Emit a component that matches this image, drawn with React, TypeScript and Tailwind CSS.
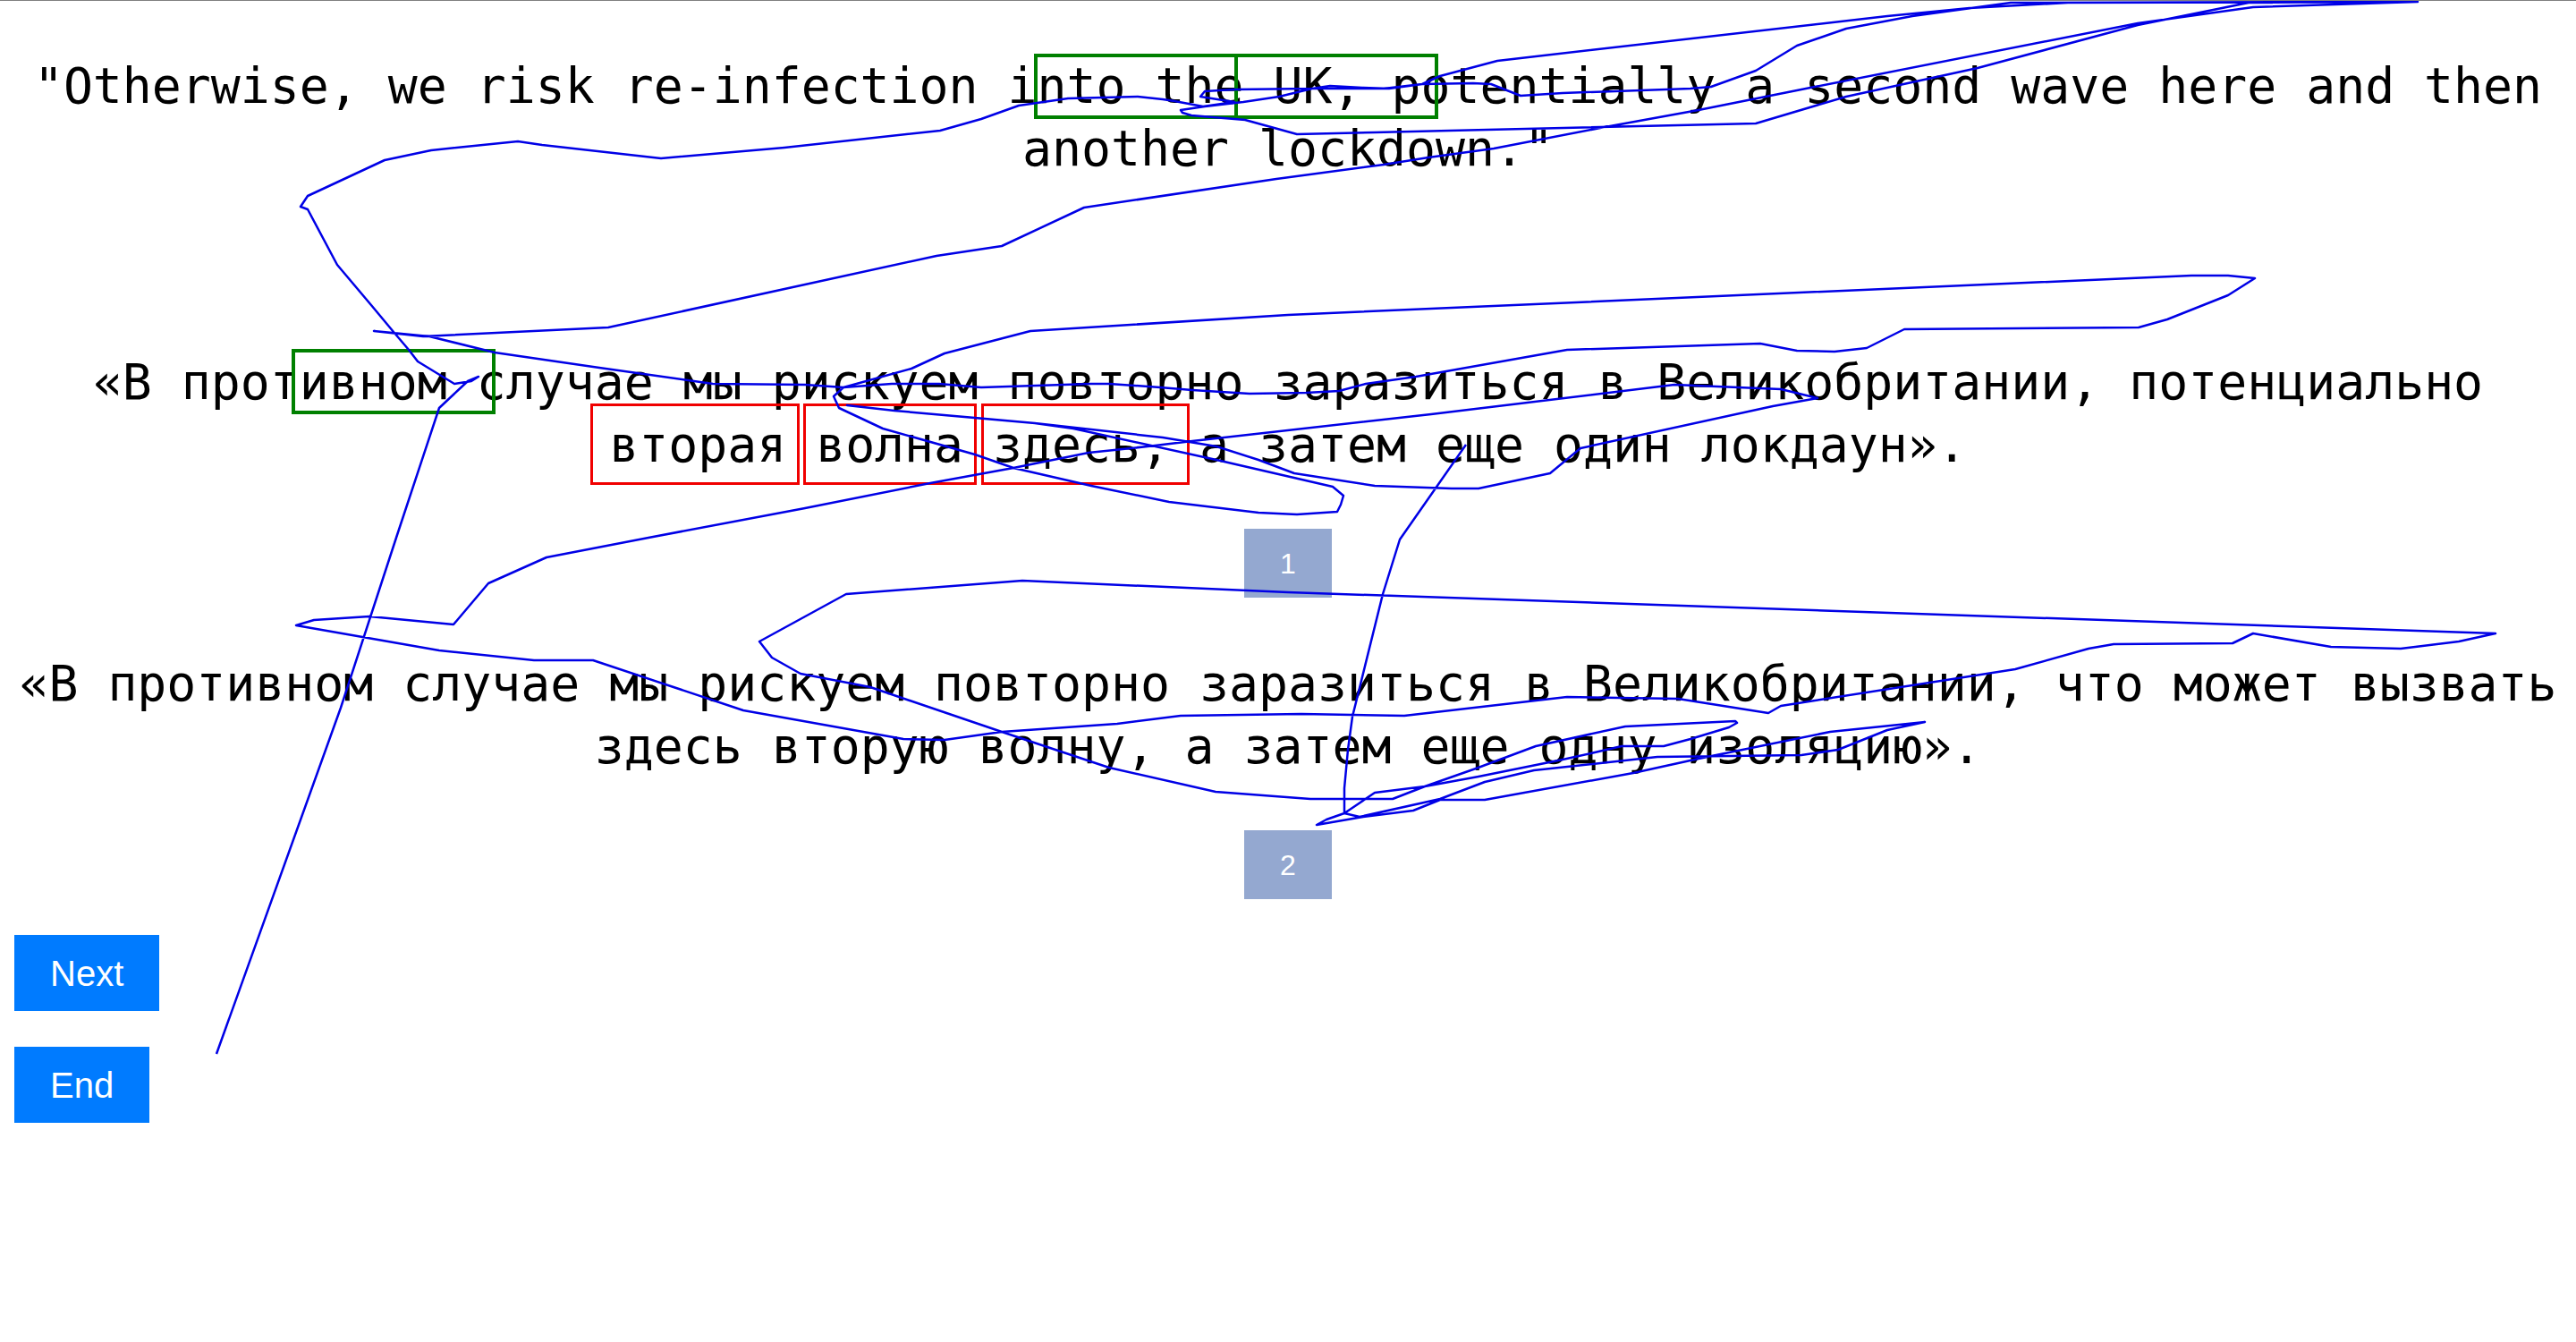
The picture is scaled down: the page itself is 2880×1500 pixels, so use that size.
import React from 'react';

const sentences = {
  source: '"Otherwise, we risk re-infection into the UK, potentially a second wave here and then another lockdown."',
  first: '«В противном случае мы рискуем повторно заразиться в Великобритании, потенциально вторая волна здесь, а затем еще один локдаун».',
  second: '«В противном случае мы рискуем повторно заразиться в Великобритании, что может вызвать здесь вторую волну, а затем еще одну изоляцию».',
};

// annotated word boxes, they sit over the text and do not follow it exactly
const greenBoxes = [
  { x: 1156, y: 59, w: 228, h: 73 },
  { x: 1380, y: 59, w: 228, h: 73 },
  { x: 326, y: 389, w: 228, h: 73 },
];
const redBoxes = [
  { x: 660, y: 450, w: 234, h: 91 },
  { x: 898, y: 450, w: 194, h: 91 },
  { x: 1097, y: 450, w: 233, h: 91 },
];

// recorded pointer trace
const trace =
  '242,1177 381,790 443,600 491,455 507,440 523,425 535,420 527,425 508,428 467,403 457,390 440,370 415,340 377,295 344,233 336,230 344,218 430,178 482,167 579,157 606,161 739,176 877,164 1051,145 1097,132 1139,117 1194,109 1272,107 1300,110 1313,112 1345,118 1380,113 1342,107 1347,101 1380,99 1467,98 1547,98 1590,93 1647,92 1667,93 1700,106 1747,103 1890,98 1913,96 1963,78 2009,50 2064,31 2138,17 2248,2 2703,1 2312,2 2202,8 2110,17 1674,67 1610,84 1590,93 1553,98 1523,97 1487,95 1467,98 1430,107 1390,113 1347,118 1320,122 1322,125 1332,128 1392,133 1450,149 1537,147 1663,144 1963,137 2064,107 2211,75 2390,27 2514,2 2703,1 2519,7 2390,25 2019,98 1899,122 1789,142 1670,165 1597,175 1547,183 1427,199 1212,231 1120,274 1047,285 680,365 473,375 418,369 480,375 553,393 670,410 797,428 900,429 943,432 997,428 1050,428 1097,432 1220,428 1240,428 1297,432 1333,435 1397,439 1460,438 1497,436 1527,428 1583,420 1752,390 1968,383 2009,391 2051,392 2087,388 2129,367 2391,365 2423,356 2491,329 2521,310 2491,307 2450,307 1440,351 1152,369 1056,394 1019,411 943,432 932,442 938,455 987,478 1090,507 1133,522 1220,542 1307,560 1407,572 1450,574 1495,571 1499,563 1502,553 1490,543 1360,513 1200,478 1157,472 1090,466 1000,458 947,452 1000,458 1157,472 1300,488 1360,498 1407,513 1447,528 1537,542 1623,545 1653,545 1733,528 1767,500 1982,453 2032,444 1991,434 1872,429 1600,462 1333,492 1283,498 1217,505 1133,522 1040,539 900,567 725,600 611,622 546,651 507,697 413,688 351,692 331,698 491,726 597,737 663,737 753,767 831,793 1010,825 1056,826 1120,817 1249,808 1320,799 1455,797 1570,799 1752,778 1876,780 1977,796 1991,788 2253,747 2335,724 2363,719 2496,718 2519,707 2606,722 2684,724 2749,716 2790,707 1440,661 1143,648 946,663 849,716 863,734 895,752 973,767 1120,817 1240,857 1359,884 1465,892 1557,892 1593,878 1650,858 1717,833 1817,811 1940,805 1942,807 1933,812 1890,825 1860,833 1813,833 1783,840 1747,848 1653,867 1593,878 1537,885 1503,908 1483,915 1472,921 1524,912 1580,905 1610,893 1660,893 1826,863 1899,847 2046,817 2152,806 2110,815 2055,837 2014,843 1853,845 1715,860 1660,873 1610,892 1520,912 1503,908 1503,880 1507,837 1512,800 1517,780 1546,663 1565,602 1639,496';

const Sentence: React.FC<{ text: string; className?: string }> = ({ text, className }) => (
  <p className={`text-center font-['DejaVu_Sans_Mono',monospace] text-[54.8px] leading-[70px] text-black ${className ?? ''}`}>{text}</p>
);

const ChoiceButton: React.FC<{ label: string }> = ({ label }) => (
  <button className="mx-auto mt-[59px] flex h-[77px] w-[98px] items-center justify-center bg-[#94a8d0] text-[32px] text-white">{label}</button>
);

const ActionButton: React.FC<{ label: string; className?: string }> = ({ label, className }) => (
  <button className={`h-[85px] bg-[#007bff] px-10 text-[40px] text-white ${className ?? ''}`}>{label}</button>
);

export default function App() {
  return (
    <div className="relative h-[1500px] w-[2880px] overflow-hidden border-t border-[#808080] bg-white font-['Liberation_Sans',Arial,sans-serif]">
      <div className="flex flex-col pt-[60px]">
        <Sentence text={sentences.source} />
        <Sentence text={sentences.first} className="mt-[191px]" />
        <ChoiceButton label="1" />
        <Sentence text={sentences.second} className="mt-[61px]" />
        <ChoiceButton label="2" />
        <div className="mt-10 flex flex-col items-start gap-10 pl-4">
          <ActionButton label="Next" />
          <ActionButton label="End" />
        </div>
      </div>

      {greenBoxes.map((b) => (
        <div
          key={b.x}
          className="absolute border-4 border-[#008000]"
          style={{ left: b.x, top: b.y, width: b.w, height: b.h }}
        />
      ))}
      {redBoxes.map((b) => (
        <div
          key={b.x}
          className="absolute border-[3px] border-[#f00000]"
          style={{ left: b.x, top: b.y, width: b.w, height: b.h }}
        />
      ))}

      <svg className="pointer-events-none absolute top-0 left-0" width={2880} height={1500} viewBox="0 0 2880 1500" fill="none">
        <polyline points={trace} stroke="#0000e6" strokeWidth={2.5} strokeLinejoin="round" />
      </svg>
    </div>
  );
}
